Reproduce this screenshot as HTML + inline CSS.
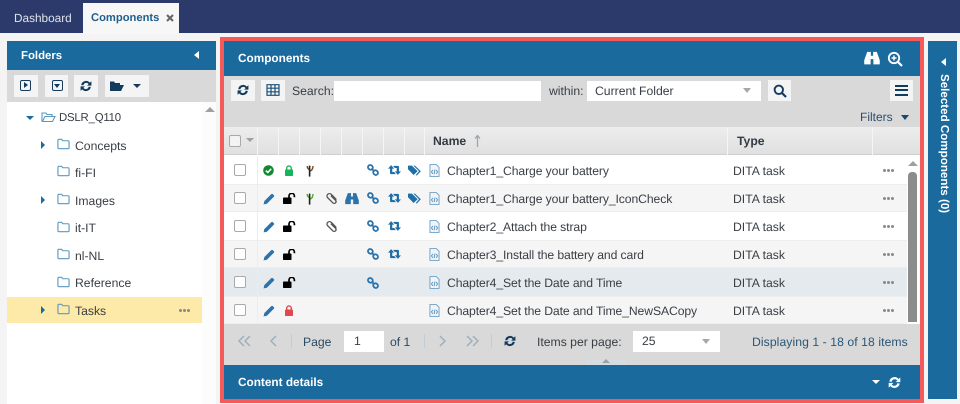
<!DOCTYPE html>
<html><head><meta charset="utf-8"><style>
html,body{margin:0;padding:0}
body{width:960px;height:404px;overflow:hidden;position:relative;background:#f4f4f4;font-family:"Liberation Sans",Arial,sans-serif;font-size:12.2px;color:#3a3f45;text-rendering:geometricPrecision}
div,svg,span{position:absolute}
.t{white-space:nowrap;line-height:16px}
.btn{background:#f4f4f4}
.inp{background:#fff}
.row{left:224px;width:683px;height:28px}
.w{background:#fff}.g{background:#f5f5f5;border-top:1px solid #eee;border-bottom:1px solid #eee;box-sizing:border-box}
.cb{left:234px;width:10px;height:10px;border:1.5px solid #a9a9a9;border-radius:2px;background:#fff}
.sep{top:127px;width:1px;height:28px;background:#f5f5f5}
.dots{color:#8a8a8a;font-size:0}
.dots i{position:absolute;top:0;width:3px;height:3px;border-radius:2px;background:#8a8a8a}
.n{left:447px;letter-spacing:-.1px}
.ty{left:733px}
.b{color:#fff;font-weight:bold;font-size:11.8px}
</style></head><body>
<svg width="0" height="0" style="display:none"><defs>
<symbol id="sync" viewBox="0 0 16 16"><path d="M2.5 7A5.6 5.6 0 0 1 12.3 4.2L14.2 2.6V7.6H9.2L11 5.8A3.4 3.4 0 0 0 5 7.2ZM13.5 9A5.6 5.6 0 0 1 3.7 11.8L1.8 13.4V8.4H6.8L5 10.2A3.4 3.4 0 0 0 11 8.8Z" fill="currentColor"/></symbol>
<symbol id="folder" viewBox="0 0 14 12"><path d="M1 10V2.2C1 1.5 1.5 1 2.2 1H5L6.3 2.5H11.8C12.5 2.5 13 3 13 3.7V10C13 10.6 12.5 11 11.8 11H2.2C1.5 11 1 10.6 1 10Z" fill="none" stroke="currentColor" stroke-width="1.2"/></symbol>
<symbol id="pen" viewBox="0 0 12 12"><path d="M0.6 11.4L1.3 8.1 8.2 1.2C8.7.7 9.4.7 9.9 1.2L10.8 2.1C11.3 2.6 11.3 3.3 10.8 3.8L3.9 10.7Z" fill="#2a73ad"/></symbol>
<symbol id="unlock" viewBox="0 0 13 11"><rect x="0" y="4.5" width="8.5" height="6.5" rx=".8" fill="#000"/><path d="M6 4.5V3A2.6 2.6 0 0 1 11.4 3V4.2" fill="none" stroke="#000" stroke-width="1.7"/></symbol>
<symbol id="lock" viewBox="0 0 10 11"><rect x="1" y="4.5" width="8" height="6.5" rx=".8" fill="currentColor"/><path d="M2.7 4.5V3.2A2.3 2.3 0 0 1 7.3 3.2V4.5" fill="none" stroke="currentColor" stroke-width="1.4"/></symbol>
<symbol id="link" viewBox="0 0 12 12"><g fill="none" stroke="#2a73ad" stroke-width="1.8"><ellipse cx="3.4" cy="3.4" rx="2.5" ry="2.2" transform="rotate(40 3.4 3.4)"/><ellipse cx="8.6" cy="8.6" rx="2.5" ry="2.2" transform="rotate(40 8.6 8.6)"/><path d="M4.5 4.5L7.5 7.5"/></g></symbol>
<symbol id="rt" viewBox="-0.2 0 13.4 10"><path d="M3 0L-.2 3.6H1.9V8.3Q1.9 9.2 2.8 9.2H8L6.2 7H4.2V3.6H6.2ZM5 .8L6.8 3H8.8V6.4H6.8L10 10 13.2 6.4H11.1V1.7Q11.1 .8 10.2 .8Z" fill="#1f6ea5"/></symbol>
<symbol id="tag" viewBox="0 0 13 11"><path d="M0 .6V4.3L5.6 10 9.6 6.2 3.9.6ZM5.4.6L11 6.2 7.8 10 8.8 10.6 12.8 6.2 7 .6Z" fill="#1f6ea5"/></symbol>
<symbol id="clip" viewBox="0 0 12 12"><path d="M10.5 7L5.8 2.2C4.9 1.3 3.4 1.3 2.5 2.2 1.6 3.1 1.6 4.4 2.5 5.3L7.2 10C7.9 10.7 9 10.7 9.7 10 10.4 9.3 10.4 8.3 9.7 7.6L5.4 3.4" fill="none" stroke="#555" stroke-width="1.2"/></symbol>
<symbol id="bino" viewBox="0 0 14 12"><path d="M2.8.6H6V4H8V.6H11.2L13.8 8V11.6H8.2V7H5.8V11.6H.2V8Z" fill="currentColor"/></symbol>
<symbol id="file" viewBox="0 0 11 14"><path d="M.6.6H7.4L10.4 3.6V13.4H.6Z" fill="#eef4f8" stroke="#6f9fc2" stroke-width="1"/><path d="M3.8 6.5L2.2 8.5 3.8 10.5M7.2 6.5L8.8 8.5 7.2 10.5M6 6L5 11" fill="none" stroke="#4f88b2" stroke-width=".9"/></symbol>
<symbol id="br" viewBox="0 0 8 12"><path d="M1.2 1C1.2 3 2 4 3.6 4.6M7 1C7 4 5.8 5.6 3.6 6.4" fill="none" stroke="currentColor" stroke-width="1.4"/><path d="M3.6 .6V11.6" stroke="#222" stroke-width="1.6"/></symbol>
</defs></svg>

<!-- top bar -->
<div style="left:0;top:0;width:960px;height:33px;background:#2b3a6a"></div>
<div class="t" style="left:14px;top:10px;color:#dfe3ec;font-size:11.8px">Dashboard</div>
<div style="left:83px;top:3px;width:96px;height:31px;background:#f7f7f7"></div>
<div class="t" style="left:91px;top:10px;color:#1f5f8b;font-weight:bold;font-size:11.2px">Components</div>
<svg style="left:166px;top:14px" width="8" height="8" viewBox="0 0 8 8"><path d="M1 1L7 7M7 1L1 7" stroke="#666" stroke-width="2.1"/></svg>

<!-- folders -->
<div style="left:7px;top:102px;width:209px;height:302px;background:#fcfcfc"></div>
<div style="left:7px;top:102px;width:195px;height:302px;background:#fff"></div>
<div style="left:7px;top:41px;width:209px;height:29px;background:#1a6a9e"></div>
<div class="t b" style="left:21px;top:48px;font-size:11.4px">Folders</div>
<div style="left:194px;top:51px;border:4.5px solid transparent;border-right:5px solid #fff;border-left:0"></div>
<div style="left:7px;top:70px;width:209px;height:32px;background:#d9d9d9"></div>
<div class="btn" style="left:14px;top:75px;width:24px;height:22px"></div>
<div style="left:20px;top:80px;width:9px;height:9px;border:1.8px solid #123b5e;border-radius:2px"></div><div style="left:24px;top:82px;border:3.2px solid transparent;border-left:4px solid #123b5e;border-right:0"></div>
<div class="btn" style="left:45px;top:75px;width:23px;height:22px"></div>
<div style="left:52px;top:80px;width:9px;height:9px;border:1.8px solid #123b5e;border-radius:2px"></div><div style="left:54px;top:84px;border:3.5px solid transparent;border-top:4px solid #123b5e;border-bottom:0"></div>
<div class="btn" style="left:74px;top:75px;width:24px;height:22px"></div>
<svg style="left:79px;top:79px;color:#123b5e" width="14" height="14"><use href="#sync"/></svg>
<div class="btn" style="left:105px;top:75px;width:44px;height:22px"></div>
<svg style="left:109px;top:80px" width="15" height="12" viewBox="0 0 15 12"><path d="M1 11V1.5H5L6 3H11V5H4L1 11H12L15 5H4" fill="#123b5e"/></svg>
<div style="left:133px;top:84px;border:4px solid transparent;border-top:4.5px solid #123b5e;border-bottom:0"></div>
<div style="left:205px;top:107px;border:5px solid transparent;border-bottom:5px solid #a0a0a0;border-top:0"></div>

<div style="left:26px;top:116px;border:4px solid transparent;border-top:4.5px solid #1a6a9e;border-bottom:0"></div>
<svg style="left:41px;top:111px;color:#5b98bf" width="15" height="12" viewBox="0 0 15 12"><path d="M1 10.5V2H5L6 3.5H11V5.5H4L1.5 10.5H11.5L14 5.5H4" fill="none" stroke="currentColor" stroke-width="1.1"/></svg>
<div class="t" style="left:59px;top:110px;font-size:11.4px;letter-spacing:-.2px">DSLR_Q110</div>

<div style="left:41px;top:141px;border:4px solid transparent;border-left:4.5px solid #1a6a9e;border-right:0"></div>
<div style="left:41px;top:196px;border:4px solid transparent;border-left:4.5px solid #1a6a9e;border-right:0"></div>
<div style="left:7px;top:297px;width:195px;height:26px;background:#fdeaa8"></div>
<div style="left:41px;top:306px;border:4px solid transparent;border-left:4.5px solid #1a6a9e;border-right:0"></div>
<svg style="left:57px;top:138px;color:#5b98bf" width="13" height="12"><use href="#folder"/></svg><div class="t" style="left:75px;top:138px">Concepts</div>
<svg style="left:57px;top:165px;color:#5b98bf" width="13" height="12"><use href="#folder"/></svg><div class="t" style="left:75px;top:165px">fi-FI</div>
<svg style="left:57px;top:193px;color:#5b98bf" width="13" height="12"><use href="#folder"/></svg><div class="t" style="left:75px;top:193px">Images</div>
<svg style="left:57px;top:221px;color:#5b98bf" width="13" height="12"><use href="#folder"/></svg><div class="t" style="left:75px;top:220px">it-IT</div>
<svg style="left:57px;top:248px;color:#5b98bf" width="13" height="12"><use href="#folder"/></svg><div class="t" style="left:75px;top:248px">nl-NL</div>
<svg style="left:57px;top:276px;color:#5b98bf" width="13" height="12"><use href="#folder"/></svg><div class="t" style="left:75px;top:275px">Reference</div>
<svg style="left:57px;top:303px;color:#5b98bf" width="13" height="12"><use href="#folder"/></svg><div class="t" style="left:75px;top:303px">Tasks</div>
<div class="dots" style="left:179px;top:309px"><i style="left:0"></i><i style="left:4px"></i><i style="left:8px"></i></div>

<!-- red frame -->
<div style="left:220px;top:37px;width:696px;height:358px;border:4px solid #f35b5b;background:#fff"></div>
<div style="left:224px;top:41px;width:696px;height:35px;background:#1a6a9e"></div>
<div class="t b" style="left:238px;top:50px">Components</div>
<svg style="left:864px;top:51px;color:#fff" width="16" height="14"><use href="#bino"/></svg>
<svg style="left:887px;top:51px" width="16" height="16" viewBox="0 0 16 16"><circle cx="7" cy="7" r="5.2" fill="none" stroke="#fff" stroke-width="1.8"/><path d="M11 11L15 15" stroke="#fff" stroke-width="2.2"/><path d="M4.5 7H9.5M7 4.5V9.5" stroke="#fff" stroke-width="1.5"/></svg>

<div style="left:224px;top:76px;width:696px;height:51px;background:#d9d9d9"></div>
<div class="btn" style="left:231px;top:80px;width:24px;height:21px"></div>
<svg style="left:236px;top:83px;color:#123b5e" width="14" height="14"><use href="#sync"/></svg>
<div class="btn" style="left:261px;top:80px;width:24px;height:21px"></div>
<svg style="left:266px;top:84px" width="14" height="12" viewBox="0 0 14 12"><path d="M1 .7H13V11.3H1ZM1 4.2H13M1 7.8H13M5 .7V11.3M9 .7V11.3" fill="none" stroke="#1a5078" stroke-width="1.2"/></svg>
<div class="t" style="left:292px;top:83px">Search:</div>
<div class="inp" style="left:334px;top:81px;width:207px;height:20px"></div>
<div class="t" style="left:549px;top:83px">within:</div>
<div class="inp" style="left:587px;top:81px;width:174px;height:20px"></div>
<div class="t" style="left:595px;top:83px">Current Folder</div>
<div style="left:743px;top:88px;border:4.5px solid transparent;border-top:5px solid #a8a8a8;border-bottom:0"></div>
<div class="btn" style="left:768px;top:80px;width:23px;height:21px"></div>
<svg style="left:773px;top:84px" width="14" height="14" viewBox="0 0 14 14"><circle cx="5.8" cy="5.8" r="4.2" fill="none" stroke="#123b5e" stroke-width="1.9"/><path d="M9 9L13 13" stroke="#123b5e" stroke-width="2.2"/></svg>
<div class="btn" style="left:890px;top:80px;width:23px;height:21px"></div>
<div style="left:895px;top:85px;width:13px;height:2px;background:#123b5e"></div>
<div style="left:895px;top:89px;width:13px;height:2px;background:#123b5e"></div>
<div style="left:895px;top:94px;width:13px;height:2px;background:#123b5e"></div>
<div class="t" style="left:860px;top:109px;color:#2a4f6e;font-size:12px">Filters</div>
<div style="left:901px;top:115px;border:4.5px solid transparent;border-top:5px solid #164a70;border-bottom:0"></div>

<!-- header -->
<div style="left:224px;top:127px;width:696px;height:28px;background:linear-gradient(#ededed,#e0e0e0);border-bottom:1px solid #cfcfcf;box-sizing:border-box"></div>
<div class="sep" style="left:257px"></div><div class="sep" style="left:278px"></div><div class="sep" style="left:299px"></div><div class="sep" style="left:320px"></div><div class="sep" style="left:341px"></div><div class="sep" style="left:362px"></div><div class="sep" style="left:383px"></div><div class="sep" style="left:404px"></div><div class="sep" style="left:424px"></div><div class="sep" style="left:727px"></div><div class="sep" style="left:872px"></div>
<div style="left:229px;top:135px;width:10px;height:10px;border:1.5px solid #a9a9a9;border-radius:2px;background:#f3f3f3"></div>
<div style="left:246px;top:138px;border:4px solid transparent;border-top:4px solid #a0a0a0;border-bottom:0"></div>
<div class="t" style="left:433px;top:133px;font-weight:bold;color:#333b44;font-size:12.2px">Name</div>
<svg style="left:474px;top:134px" width="7" height="14" viewBox="0 0 7 14"><path d="M3.5 13V2M1 4.5L3.5 1.5 6 4.5" fill="none" stroke="#9aa5ad" stroke-width="1.3"/></svg>
<div class="t" style="left:737px;top:133px;font-weight:bold;color:#333b44;font-size:12.2px">Type</div>

<!-- rows -->
<div class="row w" style="top:156px"></div>
<div class="row g" style="top:184px"></div>
<div class="row w" style="top:212px"></div>
<div class="row g" style="top:240px"></div>
<div class="row" style="top:268px;background:#e4eaee"></div>
<div class="row g" style="top:296px"></div>
<div style="left:257px;top:156px;width:1px;height:168px;background:#ececec"></div>

<div class="cb" style="top:164px"></div><div class="cb" style="top:192px"></div><div class="cb" style="top:220px"></div><div class="cb" style="top:248px"></div><div class="cb" style="top:276px"></div><div class="cb" style="top:304px"></div>

<svg style="left:263px;top:165px" width="11" height="11" viewBox="0 0 11 11"><circle cx="5.5" cy="5.5" r="5.3" fill="#0c8a2c"/><path d="M2.8 5.6L4.8 7.5 8.2 3.8" fill="none" stroke="#fff" stroke-width="1.6"/></svg>
<svg style="left:284px;top:165px;color:#18b35e" width="10" height="11"><use href="#lock"/></svg>
<svg style="left:306px;top:165px;color:#7a4a20" width="8" height="12"><use href="#br"/></svg>

<svg style="left:263px;top:193px" width="12" height="12"><use href="#pen"/></svg>
<svg style="left:283px;top:193px" width="13" height="11"><use href="#unlock"/></svg>
<svg style="left:306px;top:193px;color:#4faa2e" width="8" height="12"><use href="#br"/></svg>
<svg style="left:325px;top:192px" width="13" height="13"><use href="#clip"/></svg>
<svg style="left:345px;top:192px;color:#2a73ad" width="14" height="13"><use href="#bino"/></svg>

<svg style="left:263px;top:221px" width="12" height="12"><use href="#pen"/></svg>
<svg style="left:283px;top:221px" width="13" height="11"><use href="#unlock"/></svg>
<svg style="left:325px;top:220px" width="13" height="13"><use href="#clip"/></svg>

<svg style="left:263px;top:249px" width="12" height="12"><use href="#pen"/></svg>
<svg style="left:283px;top:249px" width="13" height="11"><use href="#unlock"/></svg>
<svg style="left:263px;top:277px" width="12" height="12"><use href="#pen"/></svg>
<svg style="left:283px;top:277px" width="13" height="11"><use href="#unlock"/></svg>
<svg style="left:263px;top:305px" width="12" height="12"><use href="#pen"/></svg>
<svg style="left:284px;top:305px;color:#e2474f" width="10" height="11"><use href="#lock"/></svg>

<svg style="left:367px;top:164px" width="12" height="12"><use href="#link"/></svg>
<svg style="left:367px;top:192px" width="12" height="12"><use href="#link"/></svg>
<svg style="left:367px;top:220px" width="12" height="12"><use href="#link"/></svg>
<svg style="left:367px;top:248px" width="12" height="12"><use href="#link"/></svg>
<svg style="left:367px;top:277px" width="12" height="12"><use href="#link"/></svg>
<svg style="left:388px;top:165px" width="13" height="10"><use href="#rt"/></svg>
<svg style="left:388px;top:193px" width="13" height="10"><use href="#rt"/></svg>
<svg style="left:388px;top:221px" width="13" height="10"><use href="#rt"/></svg>
<svg style="left:388px;top:249px" width="13" height="10"><use href="#rt"/></svg>
<svg style="left:408px;top:165px" width="13" height="11"><use href="#tag"/></svg>
<svg style="left:408px;top:193px" width="13" height="11"><use href="#tag"/></svg>

<svg style="left:429px;top:164px" width="11" height="13"><use href="#file"/></svg>
<svg style="left:429px;top:192px" width="11" height="13"><use href="#file"/></svg>
<svg style="left:429px;top:220px" width="11" height="13"><use href="#file"/></svg>
<svg style="left:429px;top:248px" width="11" height="13"><use href="#file"/></svg>
<svg style="left:429px;top:276px" width="11" height="13"><use href="#file"/></svg>
<svg style="left:429px;top:304px" width="11" height="13"><use href="#file"/></svg>

<div class="t n" style="top:163px">Chapter1_Charge your battery</div>
<div class="t n" style="top:191px">Chapter1_Charge your battery_IconCheck</div>
<div class="t n" style="top:219px">Chapter2_Attach the strap</div>
<div class="t n" style="top:247px">Chapter3_Install the battery and card</div>
<div class="t n" style="top:275px">Chapter4_Set the Date and Time</div>
<div class="t n" style="top:303px">Chapter4_Set the Date and Time_NewSACopy</div>
<div class="t ty" style="top:163px">DITA task</div>
<div class="t ty" style="top:191px">DITA task</div>
<div class="t ty" style="top:219px">DITA task</div>
<div class="t ty" style="top:247px">DITA task</div>
<div class="t ty" style="top:275px">DITA task</div>
<div class="t ty" style="top:303px">DITA task</div>
<div class="dots" style="left:883px;top:169px"><i style="left:0"></i><i style="left:4px"></i><i style="left:8px"></i></div>
<div class="dots" style="left:883px;top:197px"><i style="left:0"></i><i style="left:4px"></i><i style="left:8px"></i></div>
<div class="dots" style="left:883px;top:225px"><i style="left:0"></i><i style="left:4px"></i><i style="left:8px"></i></div>
<div class="dots" style="left:883px;top:253px"><i style="left:0"></i><i style="left:4px"></i><i style="left:8px"></i></div>
<div class="dots" style="left:883px;top:281px"><i style="left:0"></i><i style="left:4px"></i><i style="left:8px"></i></div>
<div class="dots" style="left:883px;top:309px"><i style="left:0"></i><i style="left:4px"></i><i style="left:8px"></i></div>

<div style="left:908px;top:161px;border:5px solid transparent;border-bottom:5px solid #a0a0a0;border-top:0"></div>
<div style="left:908px;top:172px;width:9px;height:150px;background:#8c8c8c;border-radius:4px 4px 0 0"></div>

<!-- footer -->
<div style="left:224px;top:324px;width:696px;height:41px;background:#d9d9d9"></div>
<svg style="left:237px;top:335px" width="15" height="12" viewBox="0 0 15 12"><path d="M7 1L2 6 7 11M13 1L8 6 13 11" fill="none" stroke="#9fb0bd" stroke-width="1.5"/></svg>
<svg style="left:269px;top:335px" width="9" height="12" viewBox="0 0 9 12"><path d="M7 1L2 6 7 11" fill="none" stroke="#9fb0bd" stroke-width="1.5"/></svg>
<div style="left:291px;top:334px;width:1px;height:14px;background:#c3ccd2"></div>
<div class="t" style="left:303px;top:334px;color:#2c4a62">Page</div>
<div class="inp" style="left:344px;top:331px;width:40px;height:21px"></div>
<div class="t" style="left:354px;top:333px">1</div>
<div class="t" style="left:390px;top:334px;color:#2c4a62">of 1</div>
<div style="left:424px;top:334px;width:1px;height:14px;background:#c3ccd2"></div>
<svg style="left:438px;top:335px" width="9" height="12" viewBox="0 0 9 12"><path d="M2 1L7 6 2 11" fill="none" stroke="#9fb0bd" stroke-width="1.5"/></svg>
<svg style="left:465px;top:335px" width="15" height="12" viewBox="0 0 15 12"><path d="M2 1L7 6 2 11M8 1L13 6 8 11" fill="none" stroke="#9fb0bd" stroke-width="1.5"/></svg>
<div style="left:491px;top:334px;width:1px;height:14px;background:#c3ccd2"></div>
<svg style="left:503px;top:334px;color:#123b5e" width="14" height="14"><use href="#sync"/></svg>
<div class="t" style="left:537px;top:334px">Items per page:</div>
<div class="inp" style="left:633px;top:331px;width:87px;height:21px"></div>
<div class="t" style="left:642px;top:333px">25</div>
<div style="left:702px;top:339px;border:4.5px solid transparent;border-top:5px solid #a8a8a8;border-bottom:0"></div>
<div class="t" style="left:752px;top:334px;color:#2c5675;letter-spacing:.07px">Displaying 1 - 18 of 18 items</div>
<div style="left:586px;top:360px;width:40px;height:5px;background:#d5dde2"></div>
<div style="left:602px;top:359px;border:4px solid transparent;border-bottom:4px solid #a0a0a0;border-top:0"></div>

<div style="left:224px;top:365px;width:696px;height:34px;background:#1a6a9e"></div>
<div class="t b" style="left:238px;top:374px">Content details</div>
<div style="left:872px;top:380px;border:4px solid transparent;border-top:4.5px solid #fff;border-bottom:0"></div>
<svg style="left:887px;top:375px;color:#fff" width="15" height="15"><use href="#sync"/></svg>

<!-- right -->
<div style="left:928px;top:41px;width:29px;height:358px;background:#1a6a9e"></div>
<div style="left:941px;top:58px;border:4px solid transparent;border-right:5px solid #fff;border-left:0"></div>
<div class="t b" style="left:936px;top:74px;font-size:11.6px;writing-mode:vertical-rl;line-height:16px">Selected Components (0)</div>
</body></html>
